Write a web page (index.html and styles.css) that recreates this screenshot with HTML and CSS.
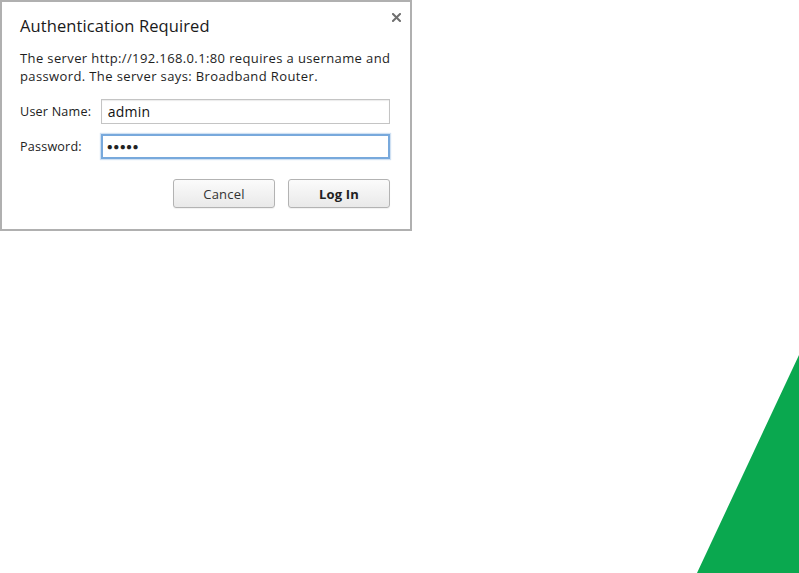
FILE: index.html
```html
<!DOCTYPE html>
<html>
<head>
<meta charset="utf-8">
<link rel="stylesheet" href="styles.css">
</head>
<body>
<div class="dialog">
  <button class="close" aria-label="Close">
    <svg width="9" height="9" viewBox="0 0 9 9"><path d="M1 1 L8 8 M8 1 L1 8" stroke="#6f6f6f" stroke-width="2" stroke-linecap="square"/></svg>
  </button>
  <h1 class="title">Authentication Required</h1>
  <p class="message">The server http://192.168.0.1:80 requires a username and password. The server says: Broadband Router.</p>
  <div class="fields">
    <label class="row"><span class="label">User Name:</span><span class="input">admin</span></label>
    <label class="row"><span class="label">Password:</span><span class="input focused">●●●●●</span></label>
  </div>
  <div class="actions">
    <span class="btn">Cancel</span>
    <span class="btn primary">Log In</span>
  </div>
</div>
<div class="triangle"></div>
</body>
</html>
```
FILE: styles.css
```css
html, body {
  margin: 0;
  padding: 0;
  background: #fff;
  width: 799px;
  height: 573px;
  overflow: hidden;
  font-family: "Open Sans", "Noto Sans", sans-serif;
  color: #222;
}
.dialog {
  position: relative;
  box-sizing: border-box;
  width: 412px;
  height: 231px;
  border: 2px solid #b0b0b0;
  background: #fff;
  padding: 0 20px 0 18px;
}
.close {
  position: absolute;
  top: 11px;
  right: 9px;
  border: 0;
  background: none;
  padding: 0;
  width: 9px;
  height: 9px;
  display: flex;
}
.title {
  margin: 0;
  padding-top: 12px;
  font-size: 16.5px;
  font-weight: normal;
  line-height: 24px;
  letter-spacing: 0.1px;
  color: #1a1a1a;
}
.message {
  margin: 11px -10px 0 0;
  font-size: 13px;
  letter-spacing: 0.38px;
  line-height: 18px;
  color: #1e1e1e;
}
.fields {
  margin-top: 14px;
  display: flex;
  flex-direction: column;
  gap: 10px;
}
.row {
  display: flex;
  align-items: center;
}
.label {
  width: 81px;
  font-size: 12.6px;
  letter-spacing: 0.2px;
  color: #222;
}
.input {
  box-sizing: border-box;
  width: 290px;
  height: 25px;
  border: 1px solid #c4c4c4;
  box-shadow: inset 0 1px 1px rgba(0,0,0,0.08);
  padding: 0 6px;
  font-size: 14px;
  letter-spacing: 0.2px;
  line-height: 23px;
  color: #111;
}
.input.focused {
  border: 2px solid #78a9dc;
  box-shadow: 0 0 1px 1px rgba(120,169,220,0.35);
  padding: 0 4px;
  font-size: 10px;
  line-height: 21px;
  letter-spacing: 0.4px;
  color: #222;
}
.actions {
  margin-top: 20px;
  display: flex;
  justify-content: flex-end;
  gap: 13px;
}
.btn {
  box-sizing: border-box;
  width: 102px;
  height: 29px;
  border: 1px solid #b3b3b3;
  border-radius: 3px;
  background: linear-gradient(#fbfbfb, #e9e9e9);
  box-shadow: 0 1px 1px rgba(0,0,0,0.06);
  display: flex;
  align-items: center;
  justify-content: center;
  font-size: 13px;
  letter-spacing: 0.2px;
  color: #333;
}
.btn.primary {
  font-weight: bold;
  color: #222;
}
.triangle {
  position: absolute;
  left: 697px;
  top: 355px;
  width: 102px;
  height: 218px;
  background: #0aa84f;
  clip-path: polygon(100% 0, 100% 100%, 0 100%);
}
```
